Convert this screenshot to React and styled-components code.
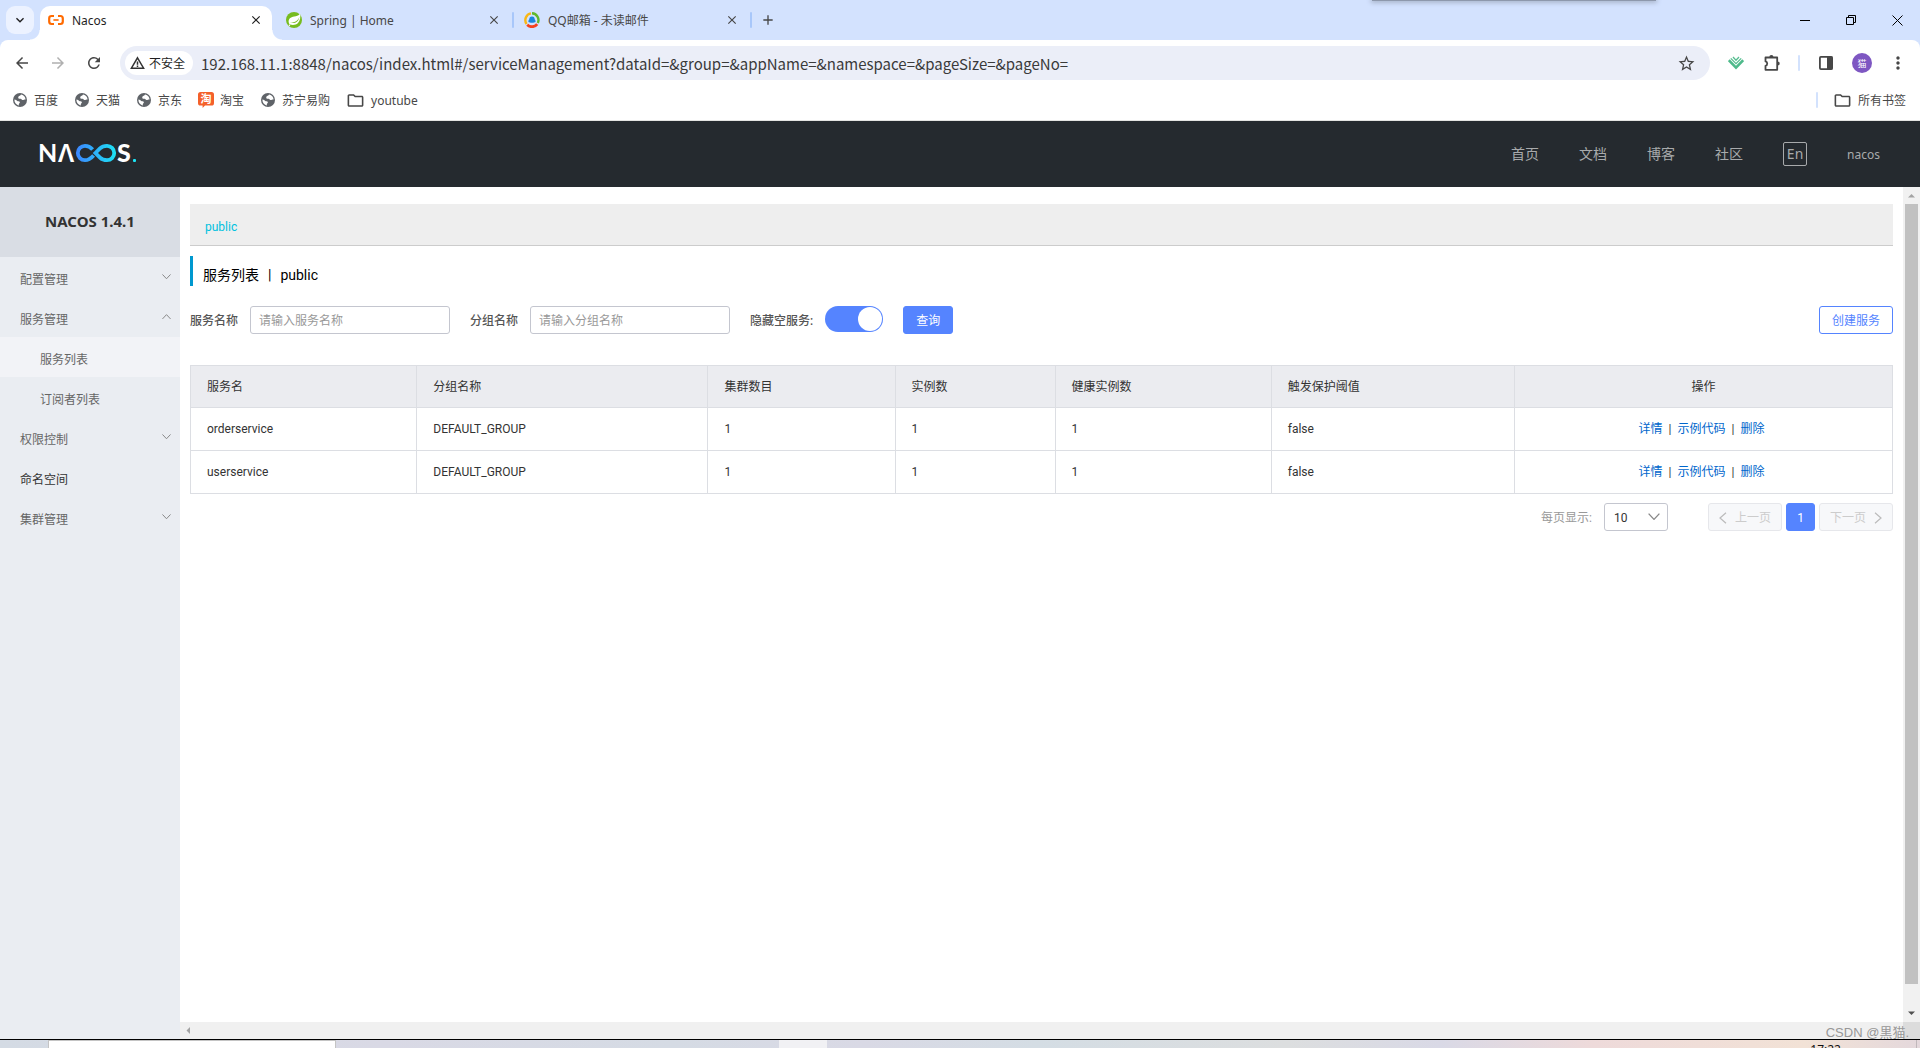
import { useState } from 'react';
import styled, { createGlobalStyle, css } from 'styled-components';
import {
  MdAdd,
  MdArrowBack,
  MdArrowForward,
  MdClose,
  MdExpandMore,
  MdMoreVert,
  MdOutlineFolder,
  MdPublic,
  MdRefresh,
  MdStarBorder,
} from 'react-icons/md';

const GlobalStyle = createGlobalStyle`
  * {
    box-sizing: border-box;
  }

  body {
    margin: 0;
    font-family: "Noto Sans", "Noto Sans CJK SC", sans-serif;
    font-size: 12px;
    color: #333;
    background: #fff;
  }

  button, input, select {
    font-family: inherit;
    font-size: inherit;
    margin: 0;
  }

  a {
    text-decoration: none;
  }
`;

const Window = styled.div`
  position: relative;
  display: flex;
  flex-direction: column;
  height: 100vh;
  overflow: hidden;
`;

/* ---------- browser ---------- */

const TopShadow = styled.div`
  position: absolute;
  top: 0;
  left: 1372px;
  width: 284px;
  height: 1px;
  background: #8d98ac;
  box-shadow: 0 0 5px 1px #8d98ac;
`;

const TabStrip = styled.div`
  display: flex;
  align-items: flex-end;
  height: 40px;
  flex: none;
  padding-left: 6px;
  background: #d3e2fe;
`;

const IconButton = styled.button`
  display: flex;
  align-items: center;
  justify-content: center;
  flex: none;
  width: ${({ $w }) => $w || 28}px;
  height: 28px;
  padding: 0;
  border: 0;
  color: ${({ $color }) => $color || '#474747'};
  background: transparent;
`;

const TabSearch = styled(IconButton)`
  align-self: center;
  margin-right: 6px;
  border-radius: 9px;
  color: #1f1f1f;
  background: #ecf2ff;
`;

const NewTab = styled(IconButton)`
  align-self: center;
`;

const Tab = styled.div`
  position: relative;
  display: flex;
  align-items: center;
  gap: 8px;
  width: 232px;
  height: 34px;
  margin-right: 6px;
  padding: 0 8px 6px;
  border-radius: 10px 10px 0 0;
  color: #474747;

  ${({ $active }) => $active && css`
    color: #1f1f1f;
    background: #fff;

    &::before, &::after {
      content: '';
      position: absolute;
      bottom: 0;
      width: 10px;
      height: 10px;
    }
    &::before {
      left: -10px;
      background: radial-gradient(circle at 0 0, transparent 9px, #fff 10px);
    }
    &::after {
      right: -10px;
      background: radial-gradient(circle at 100% 0, transparent 9px, #fff 10px);
    }
  `}
`;

const TabTitle = styled.span`
  flex: 1;
  padding-top: 2px;
  font-size: 12px;
  line-height: 16px;
`;

const TabClose = styled(IconButton)`
  width: 16px;
  height: 16px;
  color: inherit;
`;

const Divider = styled.span`
  flex: none;
  width: 2px;
  height: 16px;
  border-radius: 1px;
  background: #d3e2fd;
`;

const ToolDivider = styled(Divider)`
  margin: 0 4px;
`;

const TabDivider = styled(Divider)`
  align-self: center;
  margin: 0 2px 0 -4px;
  background: #a8c7fa;
`;

const WindowControls = styled.div`
  display: flex;
  align-self: center;
  margin-left: auto;
`;

const Toolbar = styled.div`
  display: flex;
  align-items: center;
  flex: none;
  height: 40px;
  padding: 6px 8px 0;
  border-radius: 8px 8px 0 0;
  background: #fff;
`;

const ToolbarWrap = styled.div`
  flex: none;
  background: #d3e2fe;
`;

const NavButtons = styled.div`
  display: flex;
  gap: 8px;
  margin-right: 12px;
`;

const AddressBar = styled.div`
  display: flex;
  align-items: center;
  flex: 1;
  height: 34px;
  padding: 0 10px 0 5px;
  border-radius: 17px;
  background: #ebeef8;
`;

const SecurityChip = styled.button`
  display: flex;
  align-items: center;
  gap: 4px;
  flex: none;
  width: 68px;
  height: 24px;
  padding: 0 5px;
  border: 0;
  border-radius: 12px;
  font-size: 12px;
  color: #1f1f1f;
  background: #fff;
  white-space: nowrap;
`;

const UrlInput = styled.input`
  flex: 1;
  min-width: 0;
  height: 24px;
  padding: 0 8px;
  border: 0;
  outline: 0;
  font-family: "Noto Sans CJK SC", sans-serif;
  font-size: 15px;
  color: #3a3a3a;
  background: transparent;
`;

const ToolbarIcons = styled.div`
  display: flex;
  align-items: center;
  gap: 8px;
  margin-left: 12px;
`;

const Avatar = styled.span`
  display: flex;
  align-items: center;
  justify-content: center;
  width: 20px;
  height: 20px;
  border-radius: 50%;
  font-size: 9px;
  color: #fff;
  background: #7e57c2;
`;

const BookmarkBar = styled.div`
  display: flex;
  align-items: center;
  gap: 16px;
  flex: none;
  height: 41px;
  padding: 0 14px 0 12px;
  border-bottom: 1px solid #e4e4e2;
  background: #fff;
`;

const Bookmark = styled.a`
  display: flex;
  align-items: center;
  gap: 6px;
  font-size: 12px;
  line-height: 16px;
  color: #474747;

  span {
    padding-top: 2px;
  }
`;

const BookmarkEnd = styled.div`
  display: flex;
  align-items: center;
  gap: 15px;
  margin-left: auto;
`;

/* ---------- nacos ---------- */

const Header = styled.header`
  display: flex;
  align-items: center;
  justify-content: space-between;
  flex: none;
  height: 66px;
  padding: 0 40px 0 36px;
  background: #252a2f;
`;

const HeaderNav = styled.nav`
  display: flex;
  align-items: center;
  gap: 40px;
`;

const HeaderLink = styled.a`
  font-size: ${({ $small }) => ($small ? 12 : 14)}px;
  line-height: 20px;
  color: #a8aaac;
  ${({ $small }) => $small && 'padding-top: 2px;'}
`;

const LangButton = styled.button`
  width: 24px;
  height: 24px;
  padding: 0;
  border: 1px solid #a8aaac;
  border-radius: 2px;
  font-size: 14px;
  line-height: 20px;
  color: #a8aaac;
  background: transparent;
`;

const Body = styled.div`
  display: grid;
  grid-template-columns: 180px 1fr 17px;
  grid-template-rows: 1fr 17px;
  flex: 1;
  min-height: 0;
`;

const Sidebar = styled.aside`
  grid-row: 1 / 3;
  background: #eaedf2;
`;

const SidebarTitle = styled.h1`
  height: 70px;
  margin: 0;
  font-size: 15px;
  line-height: 68px;
  text-align: center;
  color: #333;
  background: #d9dde4;
`;

const Menu = styled.ul`
  margin: 0;
  padding: 0;
  list-style: none;
`;

const MenuItem = styled.li`
  display: flex;
  align-items: center;
  justify-content: space-between;
  height: 40px;
  padding: 0 9px 0 ${({ $sub }) => ($sub ? 40 : 20)}px;
  background: ${({ $active }) => ($active ? '#f2f3f7' : 'transparent')};
`;

const MenuLink = styled.a`
  padding-top: 6px;
  font-size: 12px;
  line-height: 20px;
  color: ${({ $dark }) => ($dark ? '#333' : '#666')};
`;

const Main = styled.main`
  padding: 17px 10px 0;
  overflow: hidden;
  font-family: Roboto, "Noto Sans CJK SC", sans-serif;
  background: #fff;
`;

const NamespaceBar = styled.div`
  display: flex;
  align-items: center;
  height: 42px;
  padding: 4px 15px 0;
  border-bottom: 1px solid #ccc;
  background: #eee;

  a {
    color: #00c1de;
  }
`;

const PageTitle = styled.h2`
  display: flex;
  gap: 9px;
  height: 30px;
  margin: 10px 0 20px;
  padding: 8px 0 0 10px;
  border-left: 3px solid #0098cf;
  font-size: 14px;
  font-weight: 400;
  line-height: 22px;
  color: #000;
`;

const SearchForm = styled.form`
  display: flex;
  align-items: center;
  height: 28px;
`;

const FieldLabel = styled.label`
  margin-right: 12px;
  padding-top: 2px;
  font-weight: 500;
  line-height: 20px;
  color: #555;
`;

const TextField = styled.input`
  width: 200px;
  height: 28px;
  margin-right: 20px;
  padding: 2px 8px 0;
  border: 1px solid #c4c6cf;
  border-radius: 3px;
  background: #fff;

  &::placeholder {
    color: #999;
  }
`;

const Switch = styled.input`
  appearance: none;
  display: flex;
  align-items: center;
  align-self: flex-start;
  justify-content: ${({ checked }) => (checked ? 'flex-end' : 'flex-start')};
  width: 58px;
  height: 26px;
  margin-right: 20px;
  padding: 1px;
  border-radius: 13px;
  background: ${({ checked }) => (checked ? '#5584ff' : '#c4c6cf')};

  &::before {
    content: '';
    width: 24px;
    height: 24px;
    border-radius: 50%;
    background: #fff;
  }
`;

const Button = styled.button`
  display: flex;
  align-items: center;
  justify-content: center;
  gap: 8px;
  height: 28px;
  padding: 2px 12px 0;
  border: 1px solid #5584ff;
  border-radius: 3px;
  line-height: 20px;
  color: ${({ $primary }) => ($primary ? '#fff' : '#5584ff')};
  background: ${({ $primary }) => ($primary ? '#5584ff' : '#fff')};
  white-space: nowrap;

  &:disabled {
    width: 74px;
    padding: 2px 0 0;
    border-color: #e6e7eb;
    color: #ccc;
    background: #f7f8fa;
  }
`;

const CreateButton = styled(Button)`
  margin-left: auto;
`;

const Table = styled.table`
  width: 100%;
  margin-top: 31px;
  border-collapse: collapse;
  table-layout: fixed;

  th, td {
    height: 43px;
    padding: 0 16px;
    border: 1px solid #dcdee3;
    font-weight: 400;
    line-height: 20px;
    text-align: left;
    color: #333;
  }

  th {
    height: 42px;
    background: #ebecf0;
  }

  th:last-child, td:last-child {
    text-align: center;
  }
`;

const Actions = styled.div`
  display: flex;
  justify-content: center;
  gap: 6px;
  padding-right: 4px;

  a {
    color: #06c;
  }
`;

const Pagination = styled.div`
  display: flex;
  align-items: center;
  justify-content: flex-end;
  gap: 4px;
  margin-top: 9px;
`;

const PageSizeLabel = styled.label`
  margin-right: 8px;
  padding-top: 2px;
  line-height: 20px;
  color: #999;
`;

const SelectBox = styled.div`
  position: relative;
  width: 64px;
  height: 28px;
  margin-right: 36px;

  select {
    appearance: none;
    width: 100%;
    height: 100%;
    padding: 2px 9px 0;
    border: 1px solid #c4c6cf;
    border-radius: 3px;
    color: #333;
    background: #fff;
  }

  svg {
    position: absolute;
    top: 10px;
    right: 8px;
    pointer-events: none;
  }
`;

const PageButton = styled(Button)`
  width: 29px;
  padding: 2px 0 0;
`;

const VScroll = styled.div`
  display: flex;
  flex-direction: column;
  align-items: center;
  justify-content: space-between;
  height: 100%;
  background: #f1f1f1;
`;

const VThumb = styled.div`
  flex: 1;
  width: 13px;
  margin-bottom: 21px;
  background: #c1c1c1;
`;

const ScrollButton = styled.span`
  display: flex;
  align-items: center;
  justify-content: center;
  width: 17px;
  height: 17px;
`;

const HScroll = styled.div`
  background: #f0f0f0;
`;

const ScrollCorner = styled.div`
  background: #dcdcdc;
`;

const Watermark = styled.div`
  position: absolute;
  right: 11px;
  bottom: 7px;
  font-family: "Liberation Sans", "Noto Sans CJK JP", sans-serif;
  font-size: 13px;
  line-height: 16px;
  color: #979797;
`;

/* ---------- taskbar ---------- */

const Taskbar = styled.footer`
  display: flex;
  flex: none;
  height: 9px;
  overflow: hidden;
  border-top: 1px solid #000;
  background: linear-gradient(90deg, #d4dbe4 0, #d9d9e5 20%, #d5dbe4 35%, #d9d9e5 45%, #d4dde4 54%, #dcdedf 67%, #d9d9e6 75%, #eedada 83%, #f2e2d6 94%, #e4d8dc 100%);
`;

const TaskWindow = styled.div`
  flex: none;
  width: ${({ $w }) => $w}px;
  height: 8px;
  margin-left: ${({ $gap }) => $gap}px;
  background: ${({ $bg }) => $bg};
  ${({ $framed }) => $framed && 'border: 1px solid #c4c4c4; border-bottom: 0;'}
`;

const Clock = styled.time`
  margin-left: auto;
  padding: 2px 75px 0 0;
  font-size: 12px;
  line-height: 16px;
  color: #111;
`;

const ShowDesktop = styled.span`
  width: 4px;
  height: 8px;
  border-left: 1px solid #c0b8bb;
`;

/* ---------- drawings ---------- */

const NacosFavicon = () => (
  <svg width="16" height="16" viewBox="0 0 16 16" fill="none" stroke="#ff6a00">
    <path d="M6 4H3.6Q1.2 4 1.2 6.4V9.6Q1.2 12 3.6 12H6" strokeWidth="2.2" />
    <path d="M10 4H12.4Q14.8 4 14.8 6.4V9.6Q14.8 12 12.4 12H10" strokeWidth="2.2" />
    <path d="M5.4 8H10.6" strokeWidth="1.6" />
  </svg>
);

const SpringFavicon = () => (
  <svg width="16" height="16" viewBox="0 0 16 16">
    <circle cx="8" cy="8" r="8" fill="#77bc1f" />
    <path
      d="M14 1.6C13.4 3 12 4 9.8 4.2 5.6 4.6 2.8 6 2.6 9.2c0 1.6.6 2.6 1.4 3.4 3 .8 6 .4 8-1.6 2.2-2.2 2.8-5.6 2-9.4z"
      fill="#fff"
    />
    <path d="M13.4 4.4c-.8 3.6-4 6.2-9.6 6.4 5.4.9 8.8-.6 9.6-6.4z" fill="#77bc1f" />
    <circle cx="3.4" cy="13.3" r=".8" fill="#fff" />
  </svg>
);

const MailFavicon = () => (
  <svg width="16" height="16" viewBox="0 0 16 16" fill="none">
    <path d="M2.6 12A6.8 6.8 0 0 1 7 1.4" stroke="#f9b715" strokeWidth="2.4" />
    <path d="M8 1.3A6.8 6.8 0 0 1 13.8 11" stroke="#60b82c" strokeWidth="2.4" />
    <path d="M13.2 12.2A6.8 6.8 0 0 1 3.2 12.8" stroke="#f5421d" strokeWidth="2.8" />
    <path d="M8 4.4c1.9 0 2.7 1.3 2.7 2.9.8.9 1.1 2 .8 2.8-.9 1-6.1 1-7 0-.3-.8 0-1.9.8-2.8 0-1.6.8-2.9 2.7-2.9z" fill="#1a86dd" />
  </svg>
);

const WarningIcon = () => (
  <svg width="15" height="14" viewBox="0 0 15 14" fill="none" stroke="#333" strokeWidth="1.5">
    <path d="M7.5 1.8L13.6 12.2H1.4Z" />
    <path d="M7.5 5.4V8.8M7.5 9.6V11" />
  </svg>
);

// same globe for every bookmark without a favicon of its own
const GlobeIcon = () => (
  <svg width="16" height="16" viewBox="0 0 16 16">
    <circle cx="8" cy="8" r="7" fill="#5f6368" />
    <path
      d="M9.4 2.4C8.6 2.6 8.2 3.2 8.2 3.8C7.2 3.8 6.2 4.4 6.2 5.4C6.2 6.6 7.4 6.8 8.6 6.8C9.4 6.8 9.6 7.8 10.4 8C11.4 8.2 12 7.4 13.6 7.4C13.4 5 11.8 3 9.4 2.4Z"
      fill="#fff"
    />
    <path
      d="M2.4 7.6C3.8 7.8 4.6 8.4 5.2 9C6 9.6 7.4 9 7.8 10C8.2 11 6.8 11.4 6.8 12.4C6.8 13 7 13.4 6.6 13.4C4 12.8 2.2 10.6 2.4 7.6Z"
      fill="#fff"
    />
  </svg>
);

const VueIcon = () => (
  <svg width="16" height="14" viewBox="0 0 16 14" fill="none">
    <path d="M.8 4.2L8 11.6L15.2 4.2" stroke="#4fba8b" strokeWidth="2.6" />
    <path d="M2.8 2.4L8 7.6L13.2 2.4" stroke="#56bd90" strokeWidth="1.3" />
    <path d="M5 1L8 4.2L11 1" stroke="#56bd90" strokeWidth="1.3" />
  </svg>
);

const PuzzleIcon = () => (
  <svg width="18" height="18" viewBox="0 0 18 18">
    <path
      d="M2.5 3.5H14.2V15.8H2.5V11.8C4.8 11.4 4.8 7.8 2.5 7.4Z"
      fill="none"
      stroke="#474747"
      strokeWidth="1.8"
      strokeLinejoin="round"
    />
    <path d="M6.3 3.2a2.1 2.1 0 0 1 4.2 0zM14.6 7.4a2.1 2.1 0 0 1 0 4.2z" fill="#474747" />
  </svg>
);

const SidePanelIcon = () => (
  <svg width="16" height="16" viewBox="0 0 16 16">
    <rect x="1.9" y="1.9" width="12.2" height="12.2" rx="1" fill="none" stroke="#474747" strokeWidth="1.8" />
    <path d="M9 1.5H14.5V14.5H9Z" fill="#474747" />
  </svg>
);

const TaobaoIcon = () => (
  <svg width="16" height="16" viewBox="0 0 16 16">
    <path d="M2.5 0H13.5Q16 0 16 2.5V11Q16 13.6 13.5 13.6H7L4.6 16V13.6H2.5Q0 13.6 0 11V2.5Q0 0 2.5 0Z" fill="#f4602a" />
    <text x="8" y="11" textAnchor="middle" fontSize="11" fontWeight="700" fill="#fff">淘</text>
  </svg>
);

const NacosLogo = () => (
  <svg width="106" height="40" viewBox="-4 -7 106 40" role="img" aria-label="NACOS">
    <defs>
      <linearGradient id="loop" gradientUnits="userSpaceOnUse" x1="36" y1="0" x2="77" y2="0">
        <stop offset="0" stopColor="#3d86ff" />
        <stop offset="1" stopColor="#1ce4f4" />
      </linearGradient>
    </defs>
    <g fontFamily="Lato" fontSize="25" fontWeight="700" fill="#fff">
      <text x="-2" y="21">N</text>
      <text x="18" y="21" fontFamily="Noto Sans" fontWeight="600">Λ</text>
      <text x="77" y="21" fontWeight="900">S</text>
    </g>
    <g fill="none" stroke="url(#loop)" strokeWidth="3.8">
      <path d="M52.6 8.6C50.4 6 48 4.8 45 4.8A7.2 7.2 0 0 0 45 19.2C48 19.2 50.4 18 53.6 14.4" />
      <path d="M55.4 12L60 7.4C62 5.4 64 4.8 67 4.8A7.2 7.2 0 0 1 67 19.2C64 19.2 62 18.6 60 16.6Z" />
    </g>
    <rect x="93" y="18" width="3" height="3" rx="1" fill="#1ce4f4" />
  </svg>
);

const Chevron = ({ up, size = 9 }) => (
  <svg width={size} height={size * 0.6} viewBox="0 0 10 6" fill="none" stroke="#888" strokeWidth="1.1">
    <path d={up ? 'M.5 5.5L5 .7L9.5 5.5' : 'M.5 .5L5 5.3L9.5 .5'} />
  </svg>
);

const PageArrow = ({ next }) => (
  <svg width="8" height="12" viewBox="0 0 8 12" fill="none" stroke="#bbb" strokeWidth="1.2">
    <path d={next ? 'M1 .8L7 6L1 11.2' : 'M7 .8L1 6L7 11.2'} />
  </svg>
);

const ScrollArrow = ({ d, fill }) => (
  <svg width="9" height="9" viewBox="0 0 9 9">
    <path d={d} fill={fill} />
  </svg>
);

/* ---------- data ---------- */

const TABS = [
  { title: 'Nacos', icon: <NacosFavicon />, active: true },
  { title: 'Spring | Home', icon: <SpringFavicon /> },
  { title: 'QQ邮箱 - 未读邮件', icon: <MailFavicon /> },
];

const BOOKMARKS = [
  { label: '百度', icon: <GlobeIcon /> },
  { label: '天猫', icon: <GlobeIcon /> },
  { label: '京东', icon: <GlobeIcon /> },
  { label: '淘宝', icon: <TaobaoIcon /> },
  { label: '苏宁易购', icon: <GlobeIcon /> },
  { label: 'youtube', icon: <MdOutlineFolder size={19} /> },
];

const MENU = [
  { label: '配置管理', arrow: 'down' },
  { label: '服务管理', arrow: 'up' },
  { label: '服务列表', sub: true, active: true },
  { label: '订阅者列表', sub: true },
  { label: '权限控制', arrow: 'down' },
  { label: '命名空间', dark: true },
  { label: '集群管理', arrow: 'down' },
];

const COLUMNS = [
  { title: '服务名', width: '13.3%' },
  { title: '分组名称', width: '17.1%' },
  { title: '集群数目', width: '11%' },
  { title: '实例数', width: '9.4%' },
  { title: '健康实例数', width: '12.7%' },
  { title: '触发保护阈值', width: '14.3%' },
  { title: '操作', width: '22.2%' },
];

const SERVICES = [
  { name: 'orderservice', group: 'DEFAULT_GROUP', clusters: 1, instances: 1, healthy: 1, protect: 'false' },
  { name: 'userservice', group: 'DEFAULT_GROUP', clusters: 1, instances: 1, healthy: 1, protect: 'false' },
];

const Browser = () => (
  <>
    <TabStrip>
      <TabSearch aria-label="搜索标签页"><MdExpandMore size={16} /></TabSearch>
      {TABS.map((tab) => [
        <Tab key={tab.title} $active={tab.active}>
          {tab.icon}
          <TabTitle>{tab.title}</TabTitle>
          <TabClose aria-label="关闭"><MdClose size={14} /></TabClose>
        </Tab>,
        !tab.active && <TabDivider key={`${tab.title}-line`} />,
      ])}
      <NewTab aria-label="新标签页"><MdAdd size={16} /></NewTab>
      <WindowControls>
        <IconButton $w={46} $color="#000" aria-label="最小化">
          <svg width="10" height="10" stroke="currentColor"><path d="M0 5.5H10" /></svg>
        </IconButton>
        <IconButton $w={46} $color="#000" aria-label="还原">
          <svg width="10" height="10" fill="none" stroke="currentColor"><path d="M.5 2.5H7.5V9.5H.5ZM2.5 2.5V.5H9.5V7.5H7.5" /></svg>
        </IconButton>
        <IconButton $w={46} $color="#000" aria-label="关闭窗口">
          <svg width="11" height="11" stroke="currentColor"><path d="M.5 .5L10.5 10.5M10.5 .5L.5 10.5" /></svg>
        </IconButton>
      </WindowControls>
    </TabStrip>
    <ToolbarWrap>
      <Toolbar>
        <NavButtons>
          <IconButton aria-label="后退"><MdArrowBack size={18} /></IconButton>
          <IconButton $color="#b0b0b0" aria-label="前进"><MdArrowForward size={18} /></IconButton>
          <IconButton aria-label="刷新"><MdRefresh size={18} /></IconButton>
        </NavButtons>
        <AddressBar>
          <SecurityChip><WarningIcon />不安全</SecurityChip>
          <UrlInput
            aria-label="地址"
            defaultValue="192.168.11.1:8848/nacos/index.html#/serviceManagement?dataId=&group=&appName=&namespace=&pageSize=&pageNo="
          />
          <IconButton aria-label="收藏"><MdStarBorder size={19} /></IconButton>
        </AddressBar>
        <ToolbarIcons>
          <IconButton aria-label="Vue"><VueIcon /></IconButton>
          <IconButton aria-label="扩展程序"><PuzzleIcon /></IconButton>
          <ToolDivider />
          <IconButton aria-label="侧边栏"><SidePanelIcon /></IconButton>
          <IconButton aria-label="用户"><Avatar>猫</Avatar></IconButton>
          <IconButton aria-label="菜单"><MdMoreVert size={20} /></IconButton>
        </ToolbarIcons>
      </Toolbar>
    </ToolbarWrap>
    <BookmarkBar>
      {BOOKMARKS.map((item) => (
        <Bookmark key={item.label} href="#">{item.icon}<span>{item.label}</span></Bookmark>
      ))}
      <BookmarkEnd>
        <Divider />
        <Bookmark href="#"><MdOutlineFolder size={19} /><span>所有书签</span></Bookmark>
      </BookmarkEnd>
    </BookmarkBar>
  </>
);

const ServiceTable = () => (
  <Table>
    <colgroup>
      {COLUMNS.map((col) => <col key={col.title} style={{ width: col.width }} />)}
    </colgroup>
    <thead>
      <tr>
        {COLUMNS.map((col) => <th key={col.title}>{col.title}</th>)}
      </tr>
    </thead>
    <tbody>
      {SERVICES.map((row) => (
        <tr key={row.name}>
          <td>{row.name}</td>
          <td>{row.group}</td>
          <td>{row.clusters}</td>
          <td>{row.instances}</td>
          <td>{row.healthy}</td>
          <td>{row.protect}</td>
          <td>
            <Actions>
              <a href="#">详情</a>
              <span>|</span>
              <a href="#">示例代码</a>
              <span>|</span>
              <a href="#">删除</a>
            </Actions>
          </td>
        </tr>
      ))}
    </tbody>
  </Table>
);

export default function App() {
  const [hideEmpty, setHideEmpty] = useState(true);

  return (
    <Window>
      <GlobalStyle />
      <Browser />
      <Header>
        <NacosLogo />
        <HeaderNav>
          <HeaderLink href="#">首页</HeaderLink>
          <HeaderLink href="#">文档</HeaderLink>
          <HeaderLink href="#">博客</HeaderLink>
          <HeaderLink href="#">社区</HeaderLink>
          <LangButton>En</LangButton>
          <HeaderLink href="#" $small>nacos</HeaderLink>
        </HeaderNav>
      </Header>
      <Body>
        <Sidebar>
          <SidebarTitle>NACOS 1.4.1</SidebarTitle>
          <Menu>
            {MENU.map((item) => (
              <MenuItem key={item.label} $sub={item.sub} $active={item.active}>
                <MenuLink href="#" $dark={item.dark}>{item.label}</MenuLink>
                {item.arrow && <Chevron up={item.arrow === 'up'} />}
              </MenuItem>
            ))}
          </Menu>
        </Sidebar>
        <Main>
          <NamespaceBar><a href="#">public</a></NamespaceBar>
          <PageTitle>
            <span>服务列表</span>
            <span>|</span>
            <span>public</span>
          </PageTitle>
          <SearchForm onSubmit={(e) => e.preventDefault()}>
            <FieldLabel htmlFor="service">服务名称</FieldLabel>
            <TextField id="service" placeholder="请输入服务名称" />
            <FieldLabel htmlFor="group">分组名称</FieldLabel>
            <TextField id="group" placeholder="请输入分组名称" />
            <FieldLabel htmlFor="hide">隐藏空服务:</FieldLabel>
            <Switch
              id="hide"
              type="checkbox"
              checked={hideEmpty}
              onChange={(e) => setHideEmpty(e.target.checked)}
            />
            <Button $primary type="submit">查询</Button>
            <CreateButton type="button">创建服务</CreateButton>
          </SearchForm>
          <ServiceTable />
          <Pagination>
            <PageSizeLabel htmlFor="size">每页显示:</PageSizeLabel>
            <SelectBox>
              <select id="size" defaultValue="10">
                <option>10</option>
                <option>20</option>
                <option>30</option>
              </select>
              <Chevron size={12} />
            </SelectBox>
            <Button disabled><PageArrow />上一页</Button>
            <PageButton $primary>1</PageButton>
            <Button disabled>下一页<PageArrow next /></Button>
          </Pagination>
        </Main>
        <VScroll>
          <ScrollButton><ScrollArrow d="M1 6.5L4.5 3L8 6.5Z" fill="#a3a3a3" /></ScrollButton>
          <VThumb />
          <ScrollButton><ScrollArrow d="M1 2.5L4.5 6L8 2.5Z" fill="#505050" /></ScrollButton>
        </VScroll>
        <HScroll>
          <ScrollButton><ScrollArrow d="M6 1L2.5 4.5L6 8Z" fill="#a3a3a3" /></ScrollButton>
        </HScroll>
        <ScrollCorner />
      </Body>
      <Taskbar>
        <TaskWindow $w={288} $gap={48} $bg="#fff" $framed />
        <TaskWindow $w={48} $gap={443} $bg="#f1f1f4" />
        <Clock>17:22</Clock>
        <ShowDesktop />
      </Taskbar>
      <Watermark>CSDN @黒猫.</Watermark>
      <TopShadow />
    </Window>
  );
}
